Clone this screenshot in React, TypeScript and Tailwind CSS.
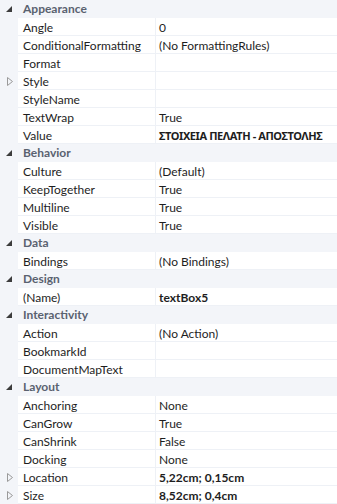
type Row = { label: string; value?: string; bold?: boolean; expand?: boolean; tight?: boolean };
type Section = { title: string; rows: Row[] };

const sections: Section[] = [
  {
    title: 'Appearance',
    rows: [
      { label: 'Angle', value: '0' },
      { label: 'ConditionalFormatting', value: '(No FormattingRules)' },
      { label: 'Format' },
      { label: 'Style', expand: true },
      { label: 'StyleName' },
      { label: 'TextWrap', value: 'True' },
      { label: 'Value', value: 'ΣΤΟΙΧΕΙΑ ΠΕΛΑΤΗ - ΑΠΟΣΤΟΛΗΣ', bold: true, tight: true },
    ],
  },
  {
    title: 'Behavior',
    rows: [
      { label: 'Culture', value: '(Default)' },
      { label: 'KeepTogether', value: 'True' },
      { label: 'Multiline', value: 'True' },
      { label: 'Visible', value: 'True' },
    ],
  },
  { title: 'Data', rows: [{ label: 'Bindings', value: '(No Bindings)' }] },
  { title: 'Design', rows: [{ label: '(Name)', value: 'textBox5', bold: true }] },
  {
    title: 'Interactivity',
    rows: [
      { label: 'Action', value: '(No Action)' },
      { label: 'BookmarkId' },
      { label: 'DocumentMapText' },
    ],
  },
  {
    title: 'Layout',
    rows: [
      { label: 'Anchoring', value: 'None' },
      { label: 'CanGrow', value: 'True' },
      { label: 'CanShrink', value: 'False' },
      { label: 'Docking', value: 'None' },
      { label: 'Location', value: '5,22cm; 0,15cm', bold: true, expand: true },
      { label: 'Size', value: '8,52cm; 0,4cm', bold: true, expand: true },
    ],
  },
];

function Expanded() {
  return (
    <svg width="6" height="6" viewBox="0 0 6 6" className="ml-[6px]">
      <path d="M6 0 L6 6 L0 6 Z" fill="#3c3c3c" />
    </svg>
  );
}

function Collapsed() {
  return (
    <svg width="6" height="9" viewBox="0 0 6 9" className="ml-[7px]">
      <path d="M0.5 0.5 L5.5 4.5 L0.5 8.5 Z" fill="none" stroke="#9a9a9a" strokeWidth="1" />
    </svg>
  );
}

export default function App() {
  return (
    <div
      className="w-[337px] h-[504px] overflow-hidden bg-[#f3f5f9] text-[12px] leading-[18px]"
      style={{ fontFamily: 'Lato, "Noto Sans", sans-serif' }}
    >
      {sections.map((s) => (
        <div key={s.title}>
          <div className="h-[18px] flex items-center">
            <div className="w-[18px] flex items-center">
              <Expanded />
            </div>
            <span className="pl-[5px] font-bold text-[#5a6270]">{s.title}</span>
          </div>
          {s.rows.map((r) => (
            <div key={r.label} className="h-[18px] flex">
              <div className="w-[18px] flex items-center">{r.expand && <Collapsed />}</div>
              <div className="w-[137px] bg-white border-b border-[#eef1f6] pl-[5px] pt-[1px] text-[#1e1e1e] whitespace-nowrap overflow-hidden">
                {r.label}
              </div>
              <div
                className={`flex-1 bg-white border-b border-l border-[#eef1f6] pl-[3px] pt-[1px] text-[#1e1e1e] whitespace-nowrap overflow-hidden ${
                  r.bold ? 'font-bold' : ''
                } ${r.tight ? 'text-[11px] tracking-[-0.4px] font-["Noto_Sans"]' : ''}`}
              >
                {r.value}
              </div>
            </div>
          ))}
        </div>
      ))}
    </div>
  );
}
